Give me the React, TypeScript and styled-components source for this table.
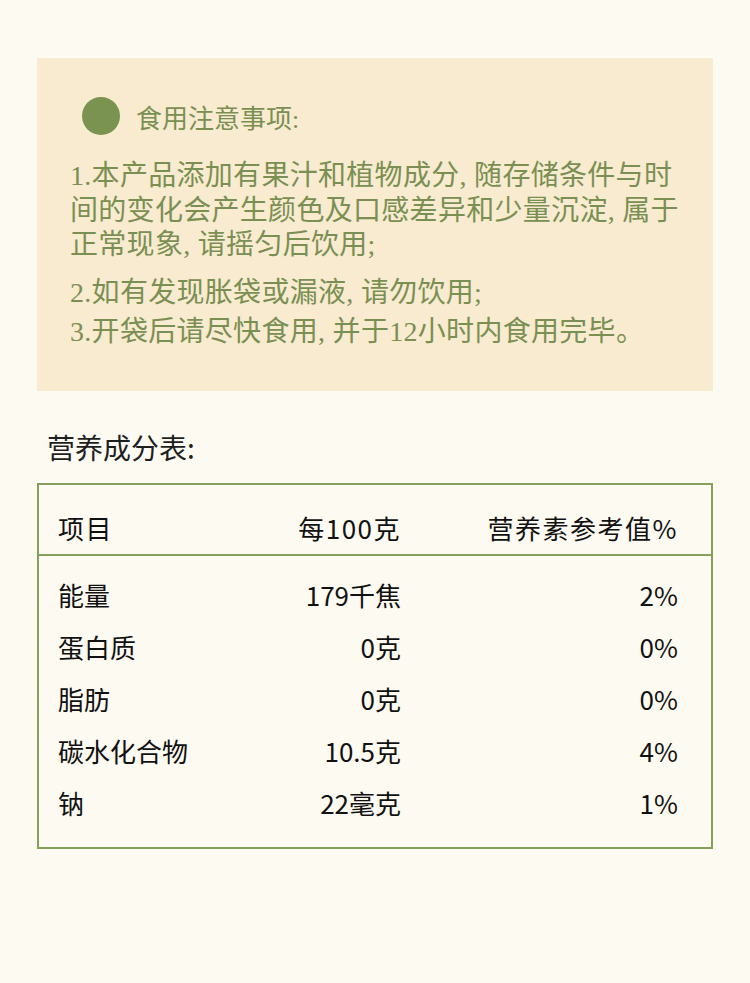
import styled, { createGlobalStyle } from "styled-components"

const GlobalStyle = createGlobalStyle`
    html, body {
        margin: 0;
        padding: 0;
        background: #fdfaf2;
    }
`

const Pagina = styled.div`
    width: 750px;
    min-height: 983px;
    padding-top: 58px;
    box-sizing: border-box;
    background: #fdfaf2;
`

const AvisoCaixa = styled.section`
    margin: 0 37px;
    background: #f8ebd0;
    padding: 39px 0 41px 0;
    color: #7a8f52;
`

const AvisoTitulo = styled.div`
    display: flex;
    align-items: center;
    gap: 16px;
    padding-left: 45px;
    height: 38px;
    font-family: "Liberation Serif", "Noto Sans CJK SC", serif;
    font-size: 26px;
`

const Bolinha = styled.span`
    width: 38px;
    height: 38px;
    border-radius: 50%;
    background: #7b9350;
`

const AvisoLista = styled.div`
    padding: 24px 20px 0 33px;
    font-family: "Liberation Serif", "Noto Sans CJK SC", serif;
    font-size: 28px;
    line-height: 34.5px;
    letter-spacing: 0.3px;
`

const AvisoItem = styled.p<{ $espaco: number }>`
    margin: ${(p) => p.$espaco}px 0 0 0;
`

const TabelaTitulo = styled.h2`
    margin: 36px 0 0 47px;
    font-family: "Noto Sans CJK SC", sans-serif;
    font-weight: 400;
    font-size: 28px;
    line-height: 40px;
    color: #1e1e1e;
`

const Tabela = styled.div`
    margin: 16px 37px 0 37px;
    border: 2px solid #85a05a;
    font-family: "Noto Sans CJK SC", sans-serif;
    font-size: 26px;
    color: #111;
`

const Linha = styled.div`
    display: grid;
    grid-template-columns: 1fr 160px 277px;
    padding: 0 33px 0 19px;
    align-items: center;
    height: 52px;
`

const Cabecalho = styled(Linha)`
    height: 53px;
    padding-top: 16px;
    border-bottom: 2px solid #85a05a;
    letter-spacing: 1.5px;
`

const Corpo = styled.div`
    padding: 13px 0 18px 0;
`

const Celula = styled.span<{ $direita?: boolean }>`
    text-align: ${(p) => (p.$direita ? "right" : "left")};
    white-space: nowrap;
`

const nutrientes = [
    { nome: "能量", valor: "179千焦", nrv: "2%" },
    { nome: "蛋白质", valor: "0克", nrv: "0%" },
    { nome: "脂肪", valor: "0克", nrv: "0%" },
    { nome: "碳水化合物", valor: "10.5克", nrv: "4%" },
    { nome: "钠", valor: "22毫克", nrv: "1%" },
]

export default function App() {
    return (
        <Pagina>
            <GlobalStyle />
            <AvisoCaixa>
                <AvisoTitulo>
                    <Bolinha />
                    <span>食用注意事项:</span>
                </AvisoTitulo>
                <AvisoLista>
                    <AvisoItem $espaco={0}>
                        1.本产品添加有果汁和植物成分, 随存储条件与时间的变化会产生颜色及口感差异和少量沉淀, 属于正常现象, 请摇匀后饮用;
                    </AvisoItem>
                    <AvisoItem $espaco={13}>2.如有发现胀袋或漏液, 请勿饮用;</AvisoItem>
                    <AvisoItem $espaco={5}>3.开袋后请尽快食用, 并于12小时内食用完毕。</AvisoItem>
                </AvisoLista>
            </AvisoCaixa>

            <TabelaTitulo>营养成分表:</TabelaTitulo>

            <Tabela>
                <Cabecalho>
                    <Celula>项目</Celula>
                    <Celula $direita>每100克</Celula>
                    <Celula $direita>营养素参考值%</Celula>
                </Cabecalho>
                <Corpo>
                    {nutrientes.map((n) => (
                        <Linha key={n.nome}>
                            <Celula>{n.nome}</Celula>
                            <Celula $direita>{n.valor}</Celula>
                            <Celula $direita>{n.nrv}</Celula>
                        </Linha>
                    ))}
                </Corpo>
            </Tabela>
        </Pagina>
    )
}
